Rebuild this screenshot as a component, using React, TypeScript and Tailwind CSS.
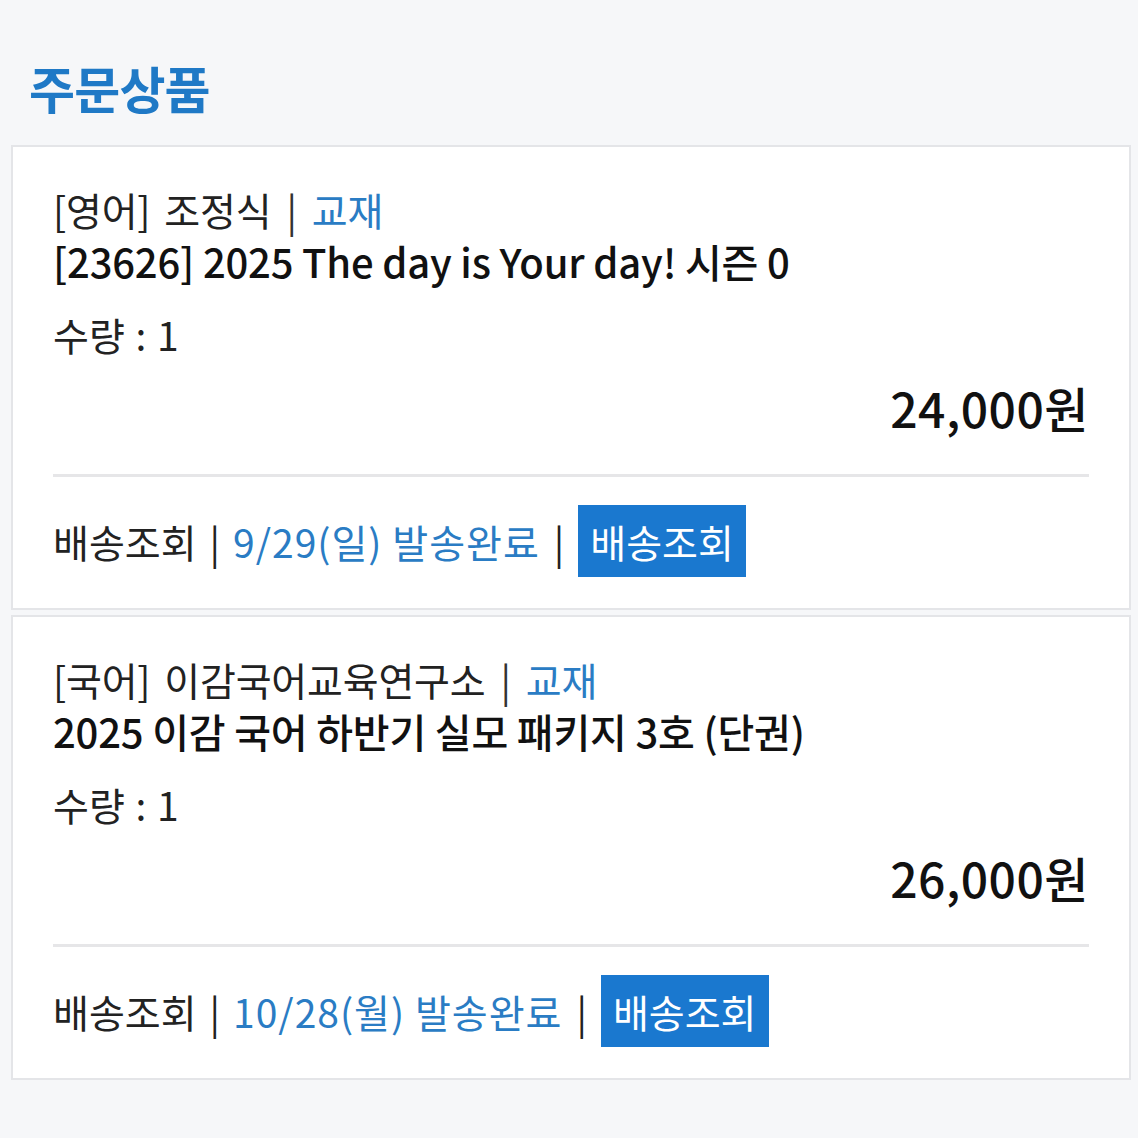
import React from 'react';

const FONT = { fontFamily: '"Noto Sans CJK KR", "Noto Sans", sans-serif' };

type Order = {
  category: string;
  teacher: string;
  kind: string;
  title: string;
  qty: number;
  price: string;
  date: string;
};

const orders: Order[] = [
  {
    category: '[영어]',
    teacher: '조정식',
    kind: '교재',
    title: '[23626] 2025 The day is Your day! 시즌 0',
    qty: 1,
    price: '24,000원',
    date: '9/29(일) 발송완료',
  },
  {
    category: '[국어]',
    teacher: '이감국어교육연구소',
    kind: '교재',
    title: '2025 이감 국어 하반기 실모 패키지 3호 (단권)',
    qty: 1,
    price: '26,000원',
    date: '10/28(월) 발송완료',
  },
];

const OrderCard = ({ o }: { o: Order }) => (
  <div className="bg-white border-2 border-[#e4e5e8] px-[40px] pt-[36px] pb-[31px]">
    <p className="flex items-center text-[39px] leading-[52px] text-[#222] tracking-[-0.2px]">
      <span>{o.category}</span>
      <span className="ml-[14px]">{o.teacher}</span>
      <span className="mx-[15px] text-[#333]">|</span>
      <span className="text-[#2a7cc4]">{o.kind}</span>
    </p>
    <p className="text-[40px] leading-[52px] font-medium text-[#111] tracking-[-0.2px]">{o.title}</p>
    <p className="mt-[21px] text-[39px] leading-[52px] text-[#222]">
      수량 <span className="mx-[2px]">:</span> {o.qty}
    </p>
    <p className="mt-[17px] text-right text-[48px] leading-[60px] font-medium text-[#111] tracking-[0.5px]">{o.price}</p>
    <div className="mt-[37px] h-[3px] bg-[#e6e6e8]" />
    <div className="mt-[28px] flex items-center text-[39px]">
      <span className="text-[#222]">배송조회</span>
      <span className="mx-[13px] text-[#222]">|</span>
      <span className="text-[#2a7cc4] tracking-[1px]">{o.date}</span>
      <span className="mx-[14px] text-[#222]">|</span>
      <button className="h-[72px] px-[12px] bg-[#1a78cf] text-white text-[39px]">배송조회</button>
    </div>
  </div>
);

export default function App() {
  return (
    <div className="min-h-screen bg-[#f6f7f9] pl-[11px] pr-[7px] pt-[57px] pb-[40px]" style={FONT}>
      <h1 className="pl-[18px] text-[50px] leading-[60px] font-bold text-[#1f79c6] tracking-[-0.8px]">주문상품</h1>
      <div className="mt-[28px] flex flex-col gap-[5px]">
        {orders.map((o, i) => (
          <OrderCard key={i} o={o} />
        ))}
      </div>
    </div>
  );
}
